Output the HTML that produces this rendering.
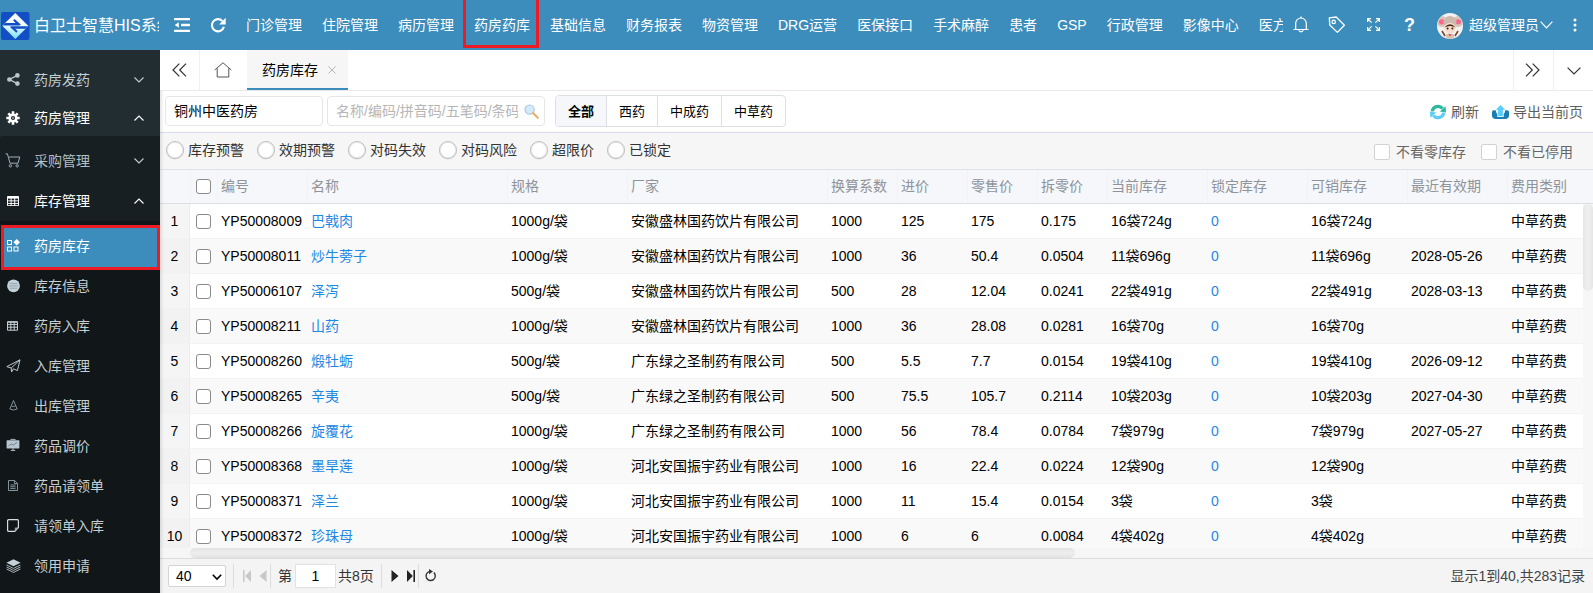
<!DOCTYPE html>
<html lang="zh-CN">
<head>
<meta charset="utf-8">
<title>白卫士智慧HIS系统</title>
<style>
*{box-sizing:border-box;margin:0;padding:0}
html,body{width:1593px;height:593px;overflow:hidden;background:#fff}
body{font-family:"Liberation Sans","Noto Sans CJK SC",sans-serif;font-size:14px;color:#000;position:relative}
i{font-style:normal;display:block}
svg{display:block;overflow:visible}
/* header */
#hdr{position:absolute;left:0;top:0;width:1593px;height:50px;background:#3c8dbc;color:#fff}
#logo{position:absolute;left:1px;top:12px;width:28.5px;height:28px}
#title{position:absolute;left:34px;top:1px;width:125px;height:50px;line-height:50px;font-size:16px;white-space:nowrap;overflow:hidden;color:#fff}
#nav{position:absolute;left:236px;top:0;height:50px;width:1047px;overflow:hidden;white-space:nowrap;font-size:0}
#nav span{display:inline-block;height:50px;line-height:50px;padding:0 10px;font-size:14px;color:#fff}
.redbox{position:absolute;border:3px solid #ed1c24}
.hi{position:absolute}
#uname{position:absolute;left:1469px;top:0;height:50px;line-height:51px;font-size:14px;color:#fff;white-space:nowrap}
/* sidebar */
#side{position:absolute;left:0;top:50px;width:160px;height:543px;background:#222d32;overflow:hidden}
#l2{position:absolute;left:0;top:86px;width:160px;height:460px;background:#181f23;border-radius:3px 0 0 0}
#l3{position:absolute;left:0;top:171px;width:160px;height:380px;background:#111619}
.mi{position:absolute;left:0;width:160px;height:40px;color:#c4ced3;font-size:14px;line-height:40px}
.mi.w{color:#fff}
.mi .t{position:absolute;left:34px;top:0;white-space:nowrap}
.mi svg{position:absolute}
/* tabs */
#tabs{position:absolute;left:160px;top:50px;width:1433px;height:41px;background:#fff;border-bottom:1px solid #e9e9e9}
#tabs .sep{position:absolute;top:0;width:1px;height:40px;background:#f0f0f0}
#tab1{position:absolute;left:87px;top:0;width:101px;height:40px;background:#f6f6f6;border-bottom:2px solid #3c8dbc;line-height:40px;font-size:14px;color:#000}
#tab1 span{position:absolute;left:15px;top:0;white-space:nowrap}
/* toolbar */
#tool{position:absolute;left:160px;top:91px;width:1433px;height:41px;background:#fff}
.inp{position:absolute;top:5px;height:30px;border:1px solid #e6e6e6;border-radius:4px;background:#fff;font-size:14px;line-height:28px;padding-left:8px;white-space:nowrap;overflow:hidden}
#seg{position:absolute;left:395px;top:4px;height:32px;border:1px solid #dcdfe6;border-radius:4px;background:#fff;font-size:0;white-space:nowrap;overflow:hidden}
#seg span{display:inline-block;height:30px;line-height:31px;font-size:13px;color:#000;padding:0 12px;border-left:1px solid #dcdfe6}
#seg span:first-child{border-left:0;background:#f5f7fa;font-weight:bold}
.tb{position:absolute;top:1px;height:40px;line-height:41px;font-size:14px;color:#5e5e5e;white-space:nowrap}
/* filter */
#filt{position:absolute;left:160px;top:132px;width:1433px;height:38px;background:#f6f6f6;border-top:1px solid #d9dce6;border-bottom:1px solid #dfe2e8}
.rad{position:absolute;top:8px;width:18px;height:18px;border:1px solid #c0c0c0;border-radius:50%;background:#fff;box-shadow:inset 0 0 0 1px rgba(200,200,200,.35),0 .5px 0 rgba(200,200,200,.5)}
.rl{position:absolute;top:-1px;height:37px;line-height:37px;font-size:14px;color:#333;white-space:nowrap}
.ck{position:absolute;top:11px;width:16px;height:16px;border:1px solid #d2d2d2;border-radius:2px;background:#fff}
.cl{position:absolute;top:-1px;height:37px;line-height:41px;font-size:14px;color:#666;white-space:nowrap}
/* grid */
#ghead{position:absolute;left:160px;top:170px;width:1433px;height:34px;background:#f5f7fa;border-bottom:1px solid #dcdfe6}
.hc{position:absolute;top:0;height:33px;line-height:33px;color:#909399;font-size:14px;white-space:nowrap}
.vs{position:absolute;top:0;width:1px;height:33px;background:#f0f2f6}
.row{position:absolute;left:160px;width:1423px;height:35px;border-bottom:1px solid #f3f3f3;background:#fff;overflow:hidden}
.row.alt{background:#f9f9f9}
.row .n{position:absolute;left:0;top:0;width:30px;height:35px;background:#f5f5f5;text-align:center;line-height:35px;border-right:1px solid #e9edf3}
.row.alt .n{background:#f2f2f2}
.c{position:absolute;top:0;height:34px;line-height:35px;white-space:nowrap;font-size:14px;color:#000}
.c.b{color:#1e88e5}
.cb{position:absolute;left:36px;top:10px;width:15px;height:15px;border:1px solid #8a8a8a;border-radius:3px;background:#fff}
#vsb{position:absolute;left:1583px;top:204px;width:10px;height:344px;background:#f7f7f7}
#vsb i{position:absolute;left:0;top:0;width:10px;height:87px;border-radius:5px;background:linear-gradient(90deg,#e6e6e6,#efefef 50%,#e6e6e6)}
#hsb{position:absolute;left:160px;top:548px;width:1433px;height:10px;background:#f6f6f6}
#hsb i{position:absolute;left:30px;top:0;width:885px;height:10px;border-radius:5px;background:linear-gradient(180deg,#e2e2e2,#eee 50%,#e2e2e2)}
/* pager */
#pager{position:absolute;left:160px;top:558px;width:1433px;height:35px;background:#f4f4f4;border-top:1px solid #dcdcdc;font-size:14px;color:#333}
#pager .s{position:absolute;top:5px;width:1px;height:24px;background:#ddd}
#pager .tx{position:absolute;top:0;height:34px;line-height:34px;white-space:nowrap}
</style>
</head>
<body>
<div id="hdr">
<svg id="logo" viewBox="0 0 28.500 28"><defs><linearGradient id="lg" x1="0" y1="0" x2="0" y2="1"><stop offset="0" stop-color="#ffffff"/><stop offset=".45" stop-color="#f0fbff"/><stop offset="1" stop-color="#74e0ff"/></linearGradient><clipPath id="dm"><path d="M14.300 .9 L27.400 13.900 L14.300 26.900 L1.300 13.800Z"/></clipPath></defs><rect width="28.500" height="28" rx="2.200" fill="#134fc4"/><path d="M14.300 .9 L27.400 13.900 L14.300 26.900 L1.300 13.800Z" fill="url(#lg)"/><g clip-path="url(#dm)" fill="#134fc4"><path d="M0 11 H14.600 L12.100 8.500 L13.500 7 L19.800 12.600 L18.600 13.500 H0Z"/><path d="M28.800 16.700 H14.200 L16.700 19.200 L15.300 20.700 L9 15.100 L10.200 14.200 H28.800Z"/></g></svg>
<div id="title">白卫士智慧HIS系统</div>
<svg class="hi" style="left:174px;top:18px" width="16" height="14" viewBox="0 0 16 14"><g fill="#fff"><rect x="0" y="0" width="16" height="2.300" rx=".5"/><rect x="7" y="5.850" width="9" height="2.300" rx=".5"/><rect x="0" y="11.700" width="16" height="2.300" rx=".5"/><path d="M.700 7 L4.800 4.200 V9.800Z"/></g></svg>
<svg class="hi" style="left:210px;top:17px" width="16" height="16" viewBox="0 0 16 16"><path d="M12.300 3.900 A6.100 6.100 0 1 0 13.900 9.800" fill="none" stroke="#fff" stroke-width="2.100"/><path d="M15.700 .8 V7.400 H9.100Z" fill="#fff"/></svg>
<div id="nav"><span>门诊管理</span><span>住院管理</span><span>病历管理</span><span>药房药库</span><span>基础信息</span><span>财务报表</span><span>物资管理</span><span>DRG运营</span><span>医保接口</span><span>手术麻醉</span><span>患者</span><span>GSP</span><span>行政管理</span><span>影像中心</span><span>医方管理</span></div>
<div class="redbox" style="left:463px;top:-3px;width:76px;height:51px"></div>
<!-- bell -->
<svg class="hi" style="left:1293px;top:16px" width="16" height="18" viewBox="0 0 16 18"><path d="M.5 13.500 H15.500 M2.700 13.500 V7.300 A5.300 5.300 0 0 1 13.300 7.300 V13.500 M5.800 14.200 A2.300 2.300 0 0 0 10.200 14.200" fill="none" stroke="#fff" stroke-width="1.200"/><circle cx="8" cy="1.400" r=".9" fill="#fff"/></svg>
<!-- tag -->
<svg class="hi" style="left:1328px;top:16px" width="18" height="18" viewBox="0 0 18 18"><path d="M1.300 1.800 L8.200 1 L16.400 9.200 L9.400 16.400 L1.800 9Z" fill="none" stroke="#fff" stroke-width="1.300" stroke-linejoin="round"/><circle cx="5.700" cy="5.900" r="1.700" fill="none" stroke="#fff" stroke-width="1.200"/></svg>
<!-- fullscreen -->
<svg class="hi" style="left:1367px;top:18px" width="13" height="13" viewBox="0 0 13 13"><g fill="none" stroke="#fff" stroke-width="1.200"><path d="M.6 4 V.6 H4 M.8 .8 L4.600 4.600"/><path d="M9 .6 H12.400 V4 M12.200 .8 L8.400 4.600"/><path d="M.6 9 V12.400 H4 M.8 12.200 L4.600 8.400"/><path d="M9 12.400 H12.400 V9 M12.200 12.200 L8.400 8.400"/></g></svg>
<div class="hi" style="left:1404px;top:0;width:11px;height:50px;line-height:51px;font-size:18px;font-weight:bold;color:#fff;text-align:center">?</div>
<!-- avatar -->
<svg class="hi" style="left:1437px;top:13px" width="26" height="26" viewBox="0 0 26 26"><defs><clipPath id="av"><circle cx="13" cy="13" r="13"/></clipPath></defs><g clip-path="url(#av)"><rect width="26" height="26" fill="#f3f1f0"/><ellipse cx="5" cy="8.500" rx="5" ry="5.500" fill="#d9c4b8"/><ellipse cx="21" cy="8.500" rx="5" ry="5.500" fill="#d9c4b8"/><ellipse cx="4.800" cy="8.800" rx="2.800" ry="2.600" fill="#f6688e"/><ellipse cx="21.200" cy="8.800" rx="2.800" ry="2.600" fill="#f6688e"/><ellipse cx="13" cy="9" rx="6.500" ry="6" fill="#cdb9ad"/><ellipse cx="13" cy="15" rx="5.600" ry="5.200" fill="#f7dccb"/><path d="M7.400 14.500 Q13 8 18.600 14.500 Q13 11.500 7.400 14.500Z" fill="#4a2a1c"/><circle cx="10.600" cy="15.600" r="1" fill="#3a2018"/><circle cx="15.400" cy="15.600" r="1" fill="#3a2018"/><path d="M5 18 L8 23 M21 18 L18 23" stroke="#7a4a32" stroke-width="1.600"/><path d="M9 21 H17 V27 H9Z" fill="#d8c2b4"/><path d="M11 20.500 L13 23.500 L15 20.500 L13 21.500Z" fill="#e8402a"/></g></svg>
<div id="uname">超级管理员</div>
<svg class="hi" style="left:1540px;top:21px" width="13" height="8" viewBox="0 0 13 8"><path d="M.6 .6 L6.500 6.800 L12.400 .6" fill="none" stroke="#fff" stroke-width="1.200"/></svg>
<svg class="hi" style="left:1573px;top:18px" width="4" height="14" viewBox="0 0 4 14"><g fill="#fff"><circle cx="2" cy="2" r="1.500"/><circle cx="2" cy="7" r="1.500"/><circle cx="2" cy="12" r="1.500"/></g></svg>
</div>

<div id="side">
<div id="l2"></div>
<div id="l3"></div>
<div class="mi" style="top:10px"><svg style="left:7px;top:13px" width="13" height="13" viewBox="0 0 13 13"><g fill="#b8c7ce"><circle cx="2.400" cy="6.500" r="2.300"/><circle cx="10.400" cy="2.400" r="2.300"/><circle cx="10.400" cy="10.600" r="2.300"/></g><path d="M10.400 2.400 L2.400 6.500 L10.400 10.600" fill="none" stroke="#b8c7ce" stroke-width="1.400"/></svg><span class="t">药房发药</span><svg style="left:134px;top:17px" width="10" height="6" viewBox="0 0 10 6"><path d="M.5 .5 L5 5 L9.500 .5" fill="none" stroke="#c4ced3" stroke-width="1.100"/></svg></div>
<div class="mi w" style="top:48px"><svg style="left:6px;top:13px" width="14" height="14" viewBox="0 0 14 14"><g stroke="#fff" stroke-width="2.600"><path d="M7 .3 V13.700 M.3 7 H13.700 M2.300 2.300 L11.700 11.700 M11.700 2.300 L2.300 11.700"/></g><circle cx="7" cy="7" r="4.600" fill="#fff"/><circle cx="7" cy="7" r="2.100" fill="#222d32"/><circle cx="7" cy="7" r="1" fill="#fff" fill-opacity=".55"/></svg><span class="t">药房管理</span><svg style="left:134px;top:17px" width="10" height="6" viewBox="0 0 10 6"><path d="M.5 5.500 L5 1 L9.500 5.500" fill="none" stroke="#fff" stroke-width="1.100"/></svg></div>
<div class="mi" style="top:91px;color:#b3bfc5"><svg style="left:5px;top:12px" width="16" height="15" viewBox="0 0 16 15"><path d="M.6 .8 H2.400 L5 10.200 H13 L14.800 4 H4" fill="none" stroke="#9fb2bb" stroke-width="1"/><circle cx="5.400" cy="12.800" r="1.200" fill="none" stroke="#9fb2bb" stroke-width="1"/><circle cx="12.200" cy="12.800" r="1.200" fill="none" stroke="#9fb2bb" stroke-width="1"/></svg><span class="t">采购管理</span><svg style="left:134px;top:17px" width="10" height="6" viewBox="0 0 10 6"><path d="M.5 .5 L5 5 L9.500 .5" fill="none" stroke="#c4ced3" stroke-width="1.100"/></svg></div>
<div class="mi w" style="top:131px"><svg style="left:7px;top:15px" width="12" height="10" viewBox="0 0 12 10"><rect x="0" y="0" width="12" height="10" rx=".8" fill="#fff"/><g fill="#181f23"><rect x="1" y="2.600" width="2.600" height="1.800"/><rect x="4.600" y="2.600" width="2.600" height="1.800"/><rect x="8.200" y="2.600" width="2.800" height="1.800"/><rect x="1" y="5.300" width="2.600" height="1.700"/><rect x="4.600" y="5.300" width="2.600" height="1.700"/><rect x="8.200" y="5.300" width="2.800" height="1.700"/><rect x="1" y="7.900" width="2.600" height="1.300"/><rect x="4.600" y="7.900" width="2.600" height="1.300"/><rect x="8.200" y="7.900" width="2.800" height="1.300"/></g></svg><span class="t">库存管理</span><svg style="left:134px;top:17px" width="10" height="6" viewBox="0 0 10 6"><path d="M.5 5.500 L5 1 L9.500 5.500" fill="none" stroke="#fff" stroke-width="1.100"/></svg></div>
<div style="position:absolute;left:1px;top:175px;width:159px;height:45px;border:3px solid #ed1c24;background:#3c8dbc"></div>
<div class="mi w" style="top:176px"><svg style="left:7px;top:13px" width="13" height="13" viewBox="0 0 13 13"><g fill="none" stroke="#fff" stroke-width="1"><rect x=".5" y="1.500" width="4" height="4"/><rect x=".5" y="8" width="4" height="4"/><rect x="7" y="8" width="4" height="4"/></g><path d="M9.700 0 L13 3.300 L9.700 6.600 L6.400 3.300Z" fill="#fff"/></svg><span class="t">药房库存</span></div>
<div class="mi" style="top:216px"><svg style="left:7px;top:13px" width="13" height="14" viewBox="0 0 13 14"><circle cx="6.500" cy="6.800" r="6.400" fill="#c3d1da"/><path d="M2.600 4.600 H10.400 M2 6.900 H11 M2.600 9.200 H10.400" stroke="#8e9ea8" stroke-width=".9"/></svg><span class="t">库存信息</span></div>
<div class="mi" style="top:256px"><svg style="left:7px;top:15px" width="11" height="10" viewBox="0 0 11 10"><path d="M.5 .8 H10.500 V9.200 H.5Z M.5 3.400 H10.500 M.5 6.200 H10.500 M3.800 .8 V9.200 M7.200 .8 V9.200" fill="none" stroke="#c4ced3" stroke-width="1"/><path d="M.5 1 H10.500" stroke="#c4ced3" stroke-width="1.400"/></svg><span class="t">药房入库</span></div>
<div class="mi" style="top:296px"><svg style="left:6px;top:13px" width="15" height="14" viewBox="0 0 15 14"><path d="M.8 7.600 L14 .8 L11.400 11.600 L7.400 9.800 L5.600 13 L5.200 9 Z M14 .8 L5.200 9" fill="none" stroke="#b8c7ce" stroke-width="1" stroke-linejoin="round"/></svg><span class="t">入库管理</span></div>
<div class="mi" style="top:336px"><svg style="left:9px;top:14px" width="9" height="11" viewBox="0 0 9 11"><path d="M4.500 .5 L.8 9 Q4.500 11 8.200 9Z M2.400 6 Q4.500 7.200 6.600 6" fill="none" stroke="#8ea0a9" stroke-width=".9"/></svg><span class="t">出库管理</span></div>
<div class="mi" style="top:376px"><svg style="left:6px;top:13px" width="14" height="12" viewBox="0 0 14 12"><path d="M4.800 1.200 V.4 H9.200 V1.200" fill="none" stroke="#b7c6cf" stroke-width=".9"/><rect x=".6" y="1.200" width="12.800" height="8.200" rx=".6" fill="#b7c6cf"/><path d="M2.600 6.800 L5.400 5 L7.400 6 L11 3.400" fill="none" stroke="#5f707a" stroke-width=".8"/><path d="M7 9.400 V11 M4.800 11.400 H9.200" stroke="#b7c6cf" stroke-width="1"/></svg><span class="t">药品调价</span></div>
<div class="mi" style="top:416px"><svg style="left:8px;top:14px" width="10" height="11" viewBox="0 0 10 11"><path d="M.5 .5 H6.600 L9.500 3.400 V10.500 H.5Z M6.400 .5 V3.600 H9.500 M2.300 5 H7.600 M2.300 6.800 H7.600 M2.300 8.600 H7.600" fill="none" stroke="#8ea0a9" stroke-width=".9"/></svg><span class="t">药品请领单</span></div>
<div class="mi" style="top:456px"><svg style="left:7px;top:13px" width="12" height="13" viewBox="0 0 12 13"><path d="M1.600 .7 H10.400 Q11.400 .7 11.400 1.700 V8.600 L7.800 12.300 H1.600 Q.6 12.300 .6 11.300 V1.700 Q.6 .7 1.600 .7Z" fill="none" stroke="#d5dde2" stroke-width="1.200"/><path d="M11.400 8.600 H8.600 Q7.800 8.600 7.800 9.400 V12.300Z" fill="#8ea0a9"/></svg><span class="t">请领单入库</span></div>
<div class="mi" style="top:496px"><svg style="left:6px;top:13px" width="15" height="14" viewBox="0 0 15 14"><path d="M7.500 .3 L14.600 3.800 L7.500 7.300 L.4 3.800Z" fill="#c3d1da"/><path d="M.6 6 L7.500 9.400 L14.400 6 M.6 8 L7.500 11.400 L14.400 8 M.6 10 L7.500 13.400 L14.400 10" fill="none" stroke="#b8c7ce" stroke-width=".9"/></svg><span class="t">领用申请</span></div>

</div>

<div id="tabs">
<svg style="position:absolute;left:12px;top:13px" width="15" height="14" viewBox="0 0 15 14"><path d="M7.300 .6 L1 7 L7.300 13.400 M14 .6 L7.700 7 L14 13.400" fill="none" stroke="#333" stroke-width="1.200"/></svg>
<i class="sep" style="left:39px"></i>
<svg style="position:absolute;left:54px;top:12px" width="18" height="16" viewBox="0 0 18 16"><path d="M.7 8 L9 .8 L17.300 8 M3.200 6.300 V15 H14.800 V6.300" fill="none" stroke="#555" stroke-width="1"/></svg>
<div id="tab1"><span>药房库存</span><svg style="position:absolute;left:81px;top:16px" width="8" height="8" viewBox="0 0 8 8"><path d="M.4 .4 L7.600 7.600 M7.600 .4 L.4 7.600" stroke="#b8b8b8" stroke-width="1"/></svg></div>
<i class="sep" style="left:1353px"></i>
<svg style="position:absolute;left:1365px;top:13px" width="15" height="14" viewBox="0 0 15 14"><path d="M1 .6 L7.300 7 L1 13.400 M7.700 .6 L14 7 L7.700 13.400" fill="none" stroke="#333" stroke-width="1.200"/></svg>
<i class="sep" style="left:1393px"></i>
<svg style="position:absolute;left:1407px;top:17px" width="14" height="8" viewBox="0 0 14 8"><path d="M.6 .6 L7 7 L13.400 .6" fill="none" stroke="#333" stroke-width="1.200"/></svg>
</div>

<div id="tool">
<div class="inp" style="left:5px;width:158px">铜州中医药房</div>
<div class="inp" style="left:167px;width:218px;color:#b6b6b6"><span style="display:block;width:182px;overflow:hidden;white-space:nowrap">名称/编码/拼音码/五笔码/条码/批号</span>
<svg style="position:absolute;left:196px;top:7px" width="15" height="15" viewBox="0 0 15 15"><circle cx="5.600" cy="5.600" r="4.600" fill="#d6ebfa" stroke="#a9c9e4" stroke-width="1.200"/><path d="M9 9 L13.800 13.800" stroke="#e3b36a" stroke-width="2.200" stroke-linecap="round"/></svg></div>
<div id="seg"><span>全部</span><span>西药</span><span>中成药</span><span>中草药</span></div>
<svg style="position:absolute;left:1270px;top:14px" width="16" height="14" viewBox="0 0 16 14"><path d="M2.300 6.300 A5.700 5.300 0 0 1 12.600 3.600" fill="none" stroke="#2db9a0" stroke-width="3.200"/><path d="M9.800 6.600 L16 7.600 L15.600 1.200Z" fill="#2db9a0"/><path d="M13.700 7.700 A5.700 5.300 0 0 1 3.400 10.400" fill="none" stroke="#5ccdfb" stroke-width="3.200"/><path d="M6.200 7.400 L0 6.400 L.4 12.800Z" fill="#5ccdfb"/></svg>
<div class="tb" style="left:1291px">刷新</div>
<svg style="position:absolute;left:1332px;top:14px" width="17" height="14" viewBox="0 0 17 14"><path d="M0 7 A1.800 1.800 0 0 1 1.800 5.200 H3.700 Q4.300 8.400 5.300 9 V11.900 H11.700 V9 Q12.700 8.400 13.300 5.200 H15.200 A1.800 1.800 0 0 1 17 7 V10.200 A3.800 3.800 0 0 1 13.200 14 H3.800 A3.800 3.800 0 0 1 0 10.200Z" fill="#1a7db3"/><path d="M8.500 0 L13.200 4.700 H10.900 V11.200 H6.100 V4.700 H3.800Z" fill="#5ccdfb"/></svg>
<div class="tb" style="left:1353px">导出当前页</div>
</div>

<div id="filt">
<i class="rad" style="left:6px"></i><span class="rl" style="left:28px">库存预警</span>
<i class="rad" style="left:97px"></i><span class="rl" style="left:119px">效期预警</span>
<i class="rad" style="left:188px"></i><span class="rl" style="left:210px">对码失效</span>
<i class="rad" style="left:279px"></i><span class="rl" style="left:301px">对码风险</span>
<i class="rad" style="left:370px"></i><span class="rl" style="left:392px">超限价</span>
<i class="rad" style="left:447px"></i><span class="rl" style="left:469px">已锁定</span>
<i class="ck" style="left:1214px"></i><span class="cl" style="left:1236px">不看零库存</span>
<i class="ck" style="left:1321px"></i><span class="cl" style="left:1343px">不看已停用</span>
</div>

<div id="ghead"><i class="cb" style="left:36px;top:9px"></i><span class="hc" style="left:61px">编号</span><span class="hc" style="left:151px">名称</span><span class="hc" style="left:351px">规格</span><span class="hc" style="left:471px">厂家</span><span class="hc" style="left:671px">换算系数</span><span class="hc" style="left:741px">进价</span><span class="hc" style="left:811px">零售价</span><span class="hc" style="left:881px">拆零价</span><span class="hc" style="left:951px">当前库存</span><span class="hc" style="left:1051px">锁定库存</span><span class="hc" style="left:1151px">可销库存</span><span class="hc" style="left:1251px">最近有效期</span><span class="hc" style="left:1351px">费用类别</span><i class="vs" style="left:30px"></i><i class="vs" style="left:57px"></i><i class="vs" style="left:147px"></i><i class="vs" style="left:347px"></i><i class="vs" style="left:467px"></i><i class="vs" style="left:667px"></i><i class="vs" style="left:737px"></i><i class="vs" style="left:807px"></i><i class="vs" style="left:877px"></i><i class="vs" style="left:947px"></i><i class="vs" style="left:1047px"></i><i class="vs" style="left:1147px"></i><i class="vs" style="left:1247px"></i><i class="vs" style="left:1347px"></i></div>
<div class="row" style="top:204px"><span class="n">1</span><i class="cb"></i><span class="c" style="left:61px">YP50008009</span><span class="c b" style="left:151px">巴戟肉</span><span class="c" style="left:351px">1000g/袋</span><span class="c" style="left:471px">安徽盛林国药饮片有限公司</span><span class="c" style="left:671px">1000</span><span class="c" style="left:741px">125</span><span class="c" style="left:811px">175</span><span class="c" style="left:881px">0.175</span><span class="c" style="left:951px">16袋724g</span><span class="c b" style="left:1051px">0</span><span class="c" style="left:1151px">16袋724g</span><span class="c" style="left:1351px">中草药费</span></div>
<div class="row alt" style="top:239px"><span class="n">2</span><i class="cb"></i><span class="c" style="left:61px">YP50008011</span><span class="c b" style="left:151px">炒牛蒡子</span><span class="c" style="left:351px">1000g/袋</span><span class="c" style="left:471px">安徽盛林国药饮片有限公司</span><span class="c" style="left:671px">1000</span><span class="c" style="left:741px">36</span><span class="c" style="left:811px">50.4</span><span class="c" style="left:881px">0.0504</span><span class="c" style="left:951px">11袋696g</span><span class="c b" style="left:1051px">0</span><span class="c" style="left:1151px">11袋696g</span><span class="c" style="left:1251px">2028-05-26</span><span class="c" style="left:1351px">中草药费</span></div>
<div class="row" style="top:274px"><span class="n">3</span><i class="cb"></i><span class="c" style="left:61px">YP50006107</span><span class="c b" style="left:151px">泽泻</span><span class="c" style="left:351px">500g/袋</span><span class="c" style="left:471px">安徽盛林国药饮片有限公司</span><span class="c" style="left:671px">500</span><span class="c" style="left:741px">28</span><span class="c" style="left:811px">12.04</span><span class="c" style="left:881px">0.0241</span><span class="c" style="left:951px">22袋491g</span><span class="c b" style="left:1051px">0</span><span class="c" style="left:1151px">22袋491g</span><span class="c" style="left:1251px">2028-03-13</span><span class="c" style="left:1351px">中草药费</span></div>
<div class="row alt" style="top:309px"><span class="n">4</span><i class="cb"></i><span class="c" style="left:61px">YP50008211</span><span class="c b" style="left:151px">山药</span><span class="c" style="left:351px">1000g/袋</span><span class="c" style="left:471px">安徽盛林国药饮片有限公司</span><span class="c" style="left:671px">1000</span><span class="c" style="left:741px">36</span><span class="c" style="left:811px">28.08</span><span class="c" style="left:881px">0.0281</span><span class="c" style="left:951px">16袋70g</span><span class="c b" style="left:1051px">0</span><span class="c" style="left:1151px">16袋70g</span><span class="c" style="left:1351px">中草药费</span></div>
<div class="row" style="top:344px"><span class="n">5</span><i class="cb"></i><span class="c" style="left:61px">YP50008260</span><span class="c b" style="left:151px">煅牡蛎</span><span class="c" style="left:351px">500g/袋</span><span class="c" style="left:471px">广东绿之圣制药有限公司</span><span class="c" style="left:671px">500</span><span class="c" style="left:741px">5.5</span><span class="c" style="left:811px">7.7</span><span class="c" style="left:881px">0.0154</span><span class="c" style="left:951px">19袋410g</span><span class="c b" style="left:1051px">0</span><span class="c" style="left:1151px">19袋410g</span><span class="c" style="left:1251px">2026-09-12</span><span class="c" style="left:1351px">中草药费</span></div>
<div class="row alt" style="top:379px"><span class="n">6</span><i class="cb"></i><span class="c" style="left:61px">YP50008265</span><span class="c b" style="left:151px">辛夷</span><span class="c" style="left:351px">500g/袋</span><span class="c" style="left:471px">广东绿之圣制药有限公司</span><span class="c" style="left:671px">500</span><span class="c" style="left:741px">75.5</span><span class="c" style="left:811px">105.7</span><span class="c" style="left:881px">0.2114</span><span class="c" style="left:951px">10袋203g</span><span class="c b" style="left:1051px">0</span><span class="c" style="left:1151px">10袋203g</span><span class="c" style="left:1251px">2027-04-30</span><span class="c" style="left:1351px">中草药费</span></div>
<div class="row" style="top:414px"><span class="n">7</span><i class="cb"></i><span class="c" style="left:61px">YP50008266</span><span class="c b" style="left:151px">旋覆花</span><span class="c" style="left:351px">1000g/袋</span><span class="c" style="left:471px">广东绿之圣制药有限公司</span><span class="c" style="left:671px">1000</span><span class="c" style="left:741px">56</span><span class="c" style="left:811px">78.4</span><span class="c" style="left:881px">0.0784</span><span class="c" style="left:951px">7袋979g</span><span class="c b" style="left:1051px">0</span><span class="c" style="left:1151px">7袋979g</span><span class="c" style="left:1251px">2027-05-27</span><span class="c" style="left:1351px">中草药费</span></div>
<div class="row alt" style="top:449px"><span class="n">8</span><i class="cb"></i><span class="c" style="left:61px">YP50008368</span><span class="c b" style="left:151px">墨旱莲</span><span class="c" style="left:351px">1000g/袋</span><span class="c" style="left:471px">河北安国振宇药业有限公司</span><span class="c" style="left:671px">1000</span><span class="c" style="left:741px">16</span><span class="c" style="left:811px">22.4</span><span class="c" style="left:881px">0.0224</span><span class="c" style="left:951px">12袋90g</span><span class="c b" style="left:1051px">0</span><span class="c" style="left:1151px">12袋90g</span><span class="c" style="left:1351px">中草药费</span></div>
<div class="row" style="top:484px"><span class="n">9</span><i class="cb"></i><span class="c" style="left:61px">YP50008371</span><span class="c b" style="left:151px">泽兰</span><span class="c" style="left:351px">1000g/袋</span><span class="c" style="left:471px">河北安国振宇药业有限公司</span><span class="c" style="left:671px">1000</span><span class="c" style="left:741px">11</span><span class="c" style="left:811px">15.4</span><span class="c" style="left:881px">0.0154</span><span class="c" style="left:951px">3袋</span><span class="c b" style="left:1051px">0</span><span class="c" style="left:1151px">3袋</span><span class="c" style="left:1351px">中草药费</span></div>
<div class="row alt" style="top:519px"><span class="n">10</span><i class="cb"></i><span class="c" style="left:61px">YP50008372</span><span class="c b" style="left:151px">珍珠母</span><span class="c" style="left:351px">1000g/袋</span><span class="c" style="left:471px">河北安国振宇药业有限公司</span><span class="c" style="left:671px">1000</span><span class="c" style="left:741px">6</span><span class="c" style="left:811px">6</span><span class="c" style="left:881px">0.0084</span><span class="c" style="left:951px">4袋402g</span><span class="c b" style="left:1051px">0</span><span class="c" style="left:1151px">4袋402g</span><span class="c" style="left:1351px">中草药费</span></div>
<div id="vsb"><i></i></div>
<div id="hsb"><i></i></div>

<div id="pager">
<div style="position:absolute;left:8px;top:6px;width:58px;height:22px;border:1px solid #d4d4d4;border-radius:2px;background:#fff;line-height:20px;padding-left:7px;color:#000">40<svg style="position:absolute;left:43px;top:8px" width="10" height="6" viewBox="0 0 10 6"><path d="M.8 .8 L5 5 L9.200 .8" fill="none" stroke="#000" stroke-width="1.600"/></svg></div>
<i class="s" style="left:73px"></i>
<svg style="position:absolute;left:83px;top:11px" width="8" height="12" viewBox="0 0 8 12"><rect x="0" y="0" width="1.600" height="12" fill="#c8c8c8"/><path d="M8 0 V12 L2.200 6Z" fill="#c8c8c8"/></svg>
<svg style="position:absolute;left:99px;top:11px" width="8" height="12" viewBox="0 0 8 12"><path d="M7.500 0 V12 L.5 6Z" fill="#c8c8c8"/></svg>
<i class="s" style="left:110px"></i>
<span class="tx" style="left:118px">第</span>
<div style="position:absolute;left:135px;top:5px;width:41px;height:24px;border:1px solid #e2e2e2;background:#fff;text-align:center;line-height:22px;color:#000">1</div>
<span class="tx" style="left:178px">共8页</span>
<i class="s" style="left:221px"></i>
<svg style="position:absolute;left:231px;top:11px" width="8" height="12" viewBox="0 0 8 12"><path d="M.5 0 V12 L7.500 6Z" fill="#222"/></svg>
<svg style="position:absolute;left:247px;top:11px" width="8" height="12" viewBox="0 0 8 12"><rect x="6.400" y="0" width="1.600" height="12" fill="#222"/><path d="M0 0 V12 L5.800 6Z" fill="#222"/></svg>
<i class="s" style="left:258px"></i>
<svg style="position:absolute;left:265px;top:10px" width="12" height="13" viewBox="0 0 12 13"><path d="M8.800 3.600 A4.600 4.600 0 1 1 4.200 2.600" fill="none" stroke="#333" stroke-width="1.400"/><path d="M4 0 L8 2.600 L4 5.200Z" fill="#333"/></svg>
<span class="tx" style="right:8px;color:#444">显示1到40,共283记录</span>
</div>
<div style="position:absolute;left:160px;top:91px;width:4px;height:502px;background:linear-gradient(90deg,rgba(0,0,0,.10),rgba(0,0,0,0))"></div>
</body>
</html>
